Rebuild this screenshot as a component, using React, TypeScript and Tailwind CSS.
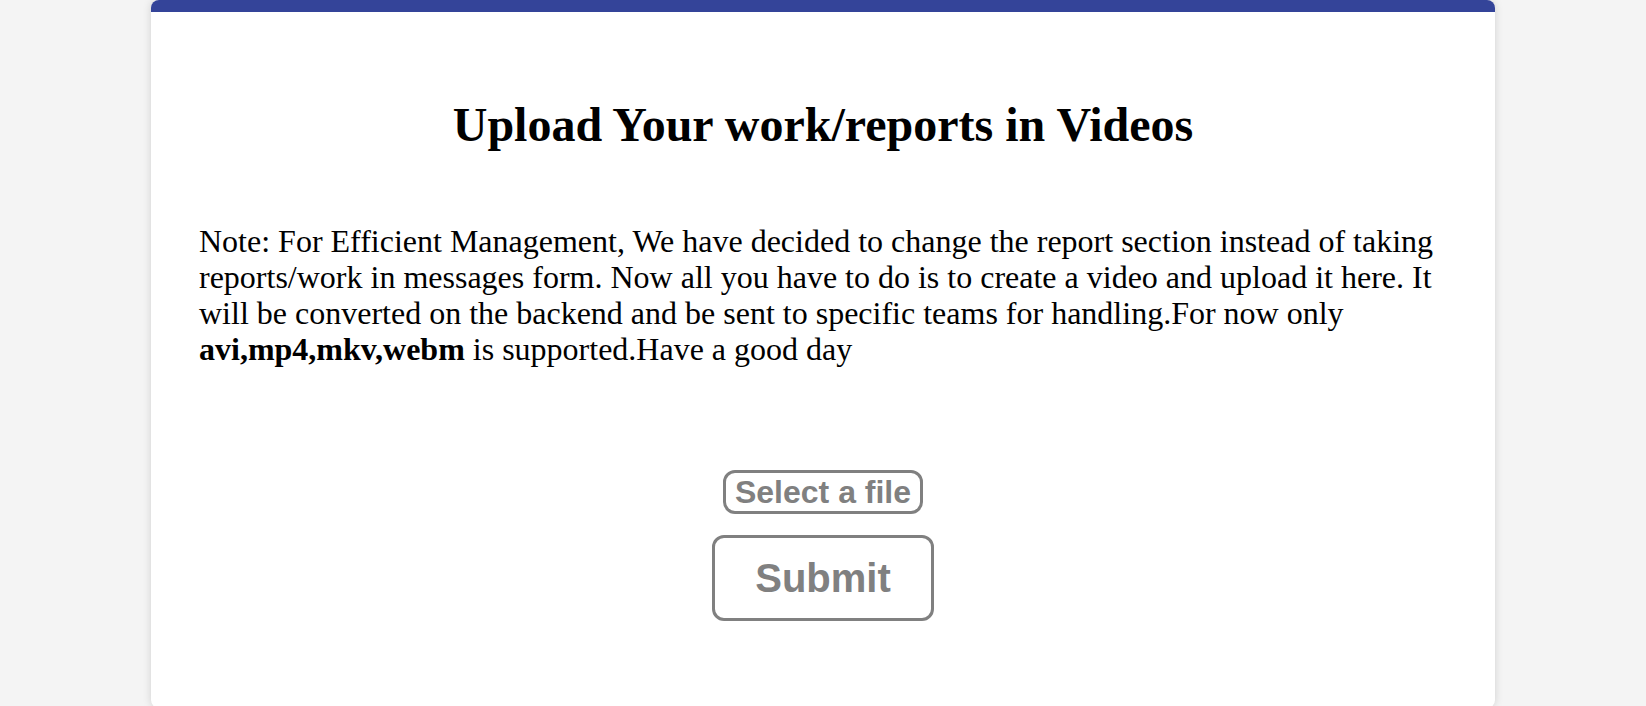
import React from 'react'

const App = () => {
    const handleSubmit = (e: React.FormEvent<HTMLFormElement>) => {
        e.preventDefault();
    }
    return (
        <div className="min-h-screen bg-[#f4f4f4] flex justify-center" style={{ fontFamily: '"Liberation Serif", serif' }}>
            <div className="w-[1344px] h-[708px] bg-white rounded-lg shadow-[0_0_8px_rgba(0,0,0,0.15)] overflow-hidden">
                <div className="h-3 bg-[#344499]"></div>
                <div className="px-12">
                    <h1 className="mt-[77px] text-center text-[48px] font-bold text-black">
                        Upload Your work/reports in Videos
                    </h1>
                    <p className="mt-[62px] text-[32px] leading-[36px] text-black">
                        Note: For Efficient Management, We have decided to change the report section instead of taking reports/work in messages form. Now all you have to do is to create a video and upload it here. It will be converted on the backend and be sent to specific teams for handling.For now only <b>avi,mp4,mkv,webm</b> is supported.Have a good day
                    </p>
                    <form
                        className="mt-[103px] flex flex-col items-center gap-[21px]"
                        style={{ fontFamily: '"Liberation Sans", Arial, sans-serif' }}
                        onSubmit={handleSubmit}
                    >
                        <label
                            htmlFor="media"
                            className="px-[9px] border-[3px] border-[#808080] rounded-xl text-[32px] leading-[38px] font-bold text-[#808080] cursor-pointer"
                        >
                            Select a file
                        </label>
                        <input id="media" name="media" type="file" accept=".avi,.mp4,.mkv,.webm" className="hidden" />
                        <button
                            type="submit"
                            className="px-10 py-[17px] border-[3px] border-[#808080] rounded-xl bg-white text-[40px] leading-[46px] font-bold text-[#808080]"
                        >
                            Submit
                        </button>
                    </form>
                </div>
            </div>
        </div>
    )
}

export default App;
